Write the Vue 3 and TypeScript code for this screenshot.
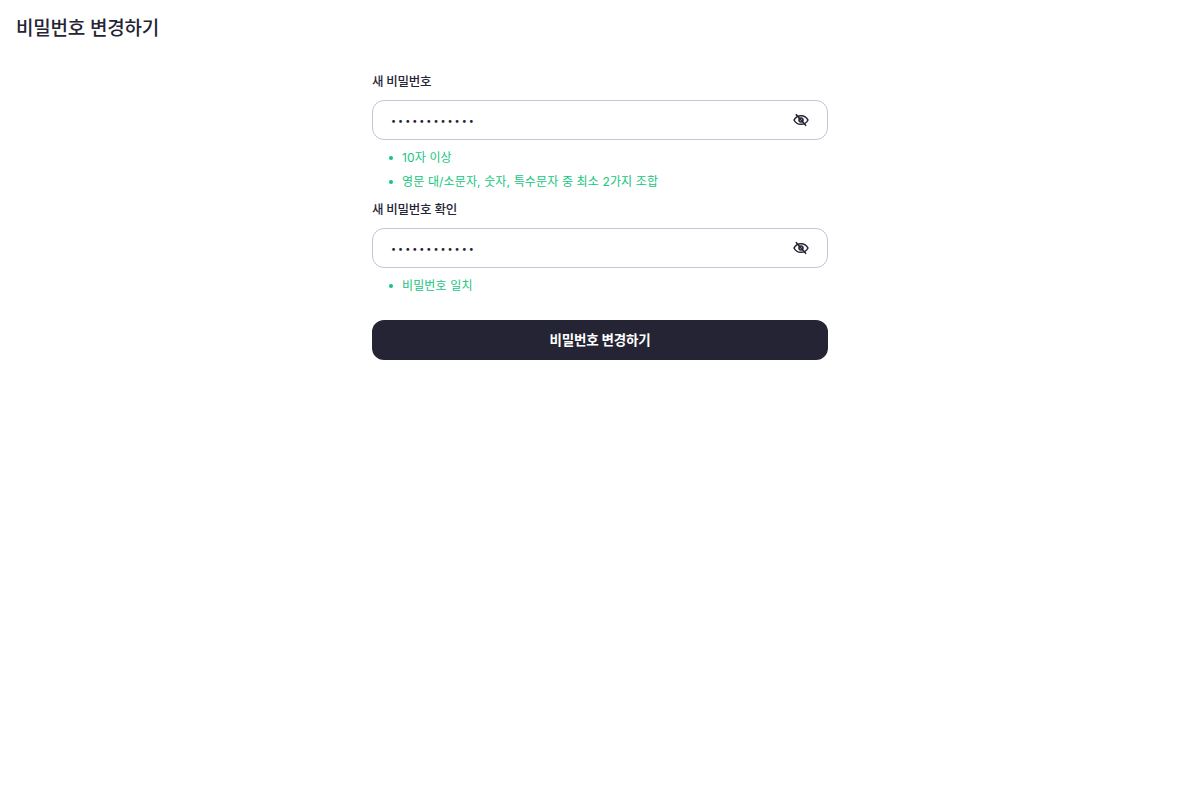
<script setup lang="ts">
import { ref } from 'vue'

interface Field {
  label: string
  hints: string[]
}

const fields: Field[] = [
  { label: '새 비밀번호', hints: ['10자 이상', '영문 대/소문자, 숫자, 특수문자 중 최소 2가지 조합'] },
  { label: '새 비밀번호 확인', hints: ['비밀번호 일치'] },
]
const password = ref('abcdefghijkl')
</script>

<template>
  <div class="page">
    <header class="header">
      <h1 class="title">비밀번호 변경하기</h1>
    </header>
    <form class="form" @submit.prevent>
      <div v-for="field in fields" :key="field.label" class="field">
        <label class="label">{{ field.label }}</label>
        <div class="input-box">
          <input v-model="password" class="input" type="password" />
          <button type="button" class="eye" aria-label="비밀번호 표시">
            <svg width="16" height="16" viewBox="0 0 24 24" fill="none" stroke="#252434" stroke-width="2.3" stroke-linecap="round" stroke-linejoin="round">
              <path d="M1.5 12C3.5 8 7.300 5.500 12 5.500S20.500 8 22.500 12c-2 4-5.800 6.500-10.500 6.500S3.500 16 1.500 12Z" />
              <circle cx="12" cy="12" r="3" />
              <path d="M5 4l14 16" />
            </svg>
          </button>
        </div>
        <ul class="hints">
          <li v-for="hint in field.hints" :key="hint" class="hint">{{ hint }}</li>
        </ul>
      </div>
      <button type="submit" class="submit">비밀번호 변경하기</button>
    </form>
  </div>
</template>

<style scoped>
.page {
  font-family: "Inter", "Noto Sans CJK KR", sans-serif;
  color: #252434;
}
.header {
  height: 58px;
  display: flex;
  align-items: center;
  padding: 0 16px;
  box-sizing: border-box;
}
.title {
  margin: 0;
  font-size: 19px;
  font-weight: 500;
  line-height: 24px;
  letter-spacing: -0.2px;
}
.form {
  width: 456px;
  margin: 13px auto 0;
  display: flex;
  flex-direction: column;
}
.field {
  display: flex;
  flex-direction: column;
}
.label {
  font-size: 12.500px;
  font-weight: 500;
  line-height: 20px;
  letter-spacing: -0.25px;
  padding-top: 1px;
  margin-bottom: 8px;
}
.input-box {
  height: 40px;
  box-sizing: border-box;
  border: 1px solid #c4c4d4;
  border-radius: 12px;
  display: flex;
  align-items: center;
  padding: 0 18px;
  background: #fff;
}
.input {
  flex: 1;
  min-width: 0;
  border: none;
  outline: none;
  padding: 0;
  font-size: 9px;
  letter-spacing: 2px;
  font-family: inherit;
  color: #252434;
  background: transparent;
}
.eye {
  width: 16px;
  height: 16px;
  padding: 0;
  border: none;
  background: none;
  display: flex;
}
.hints {
  list-style: none;
  margin: 6px 0 5px;
  padding: 0 0 0 16px;
}
.field:last-of-type .hints {
  margin-bottom: 22px;
}
.hint {
  position: relative;
  padding-left: 14px;
  font-size: 12px;
  line-height: 24px;
  letter-spacing: 0.14px;
  color: #14c67e;
}
.hint::before {
  content: "";
  position: absolute;
  left: 1px;
  top: 10px;
  width: 4px;
  height: 4px;
  border-radius: 50%;
  background: #14c67e;
}
.submit {
  height: 40px;
  border: none;
  border-radius: 12px;
  background: #252434;
  color: #fff;
  font-family: inherit;
  font-size: 13.500px;
  font-weight: 600;
  letter-spacing: -0.2px;
  padding: 0 0 2px;
}
</style>
